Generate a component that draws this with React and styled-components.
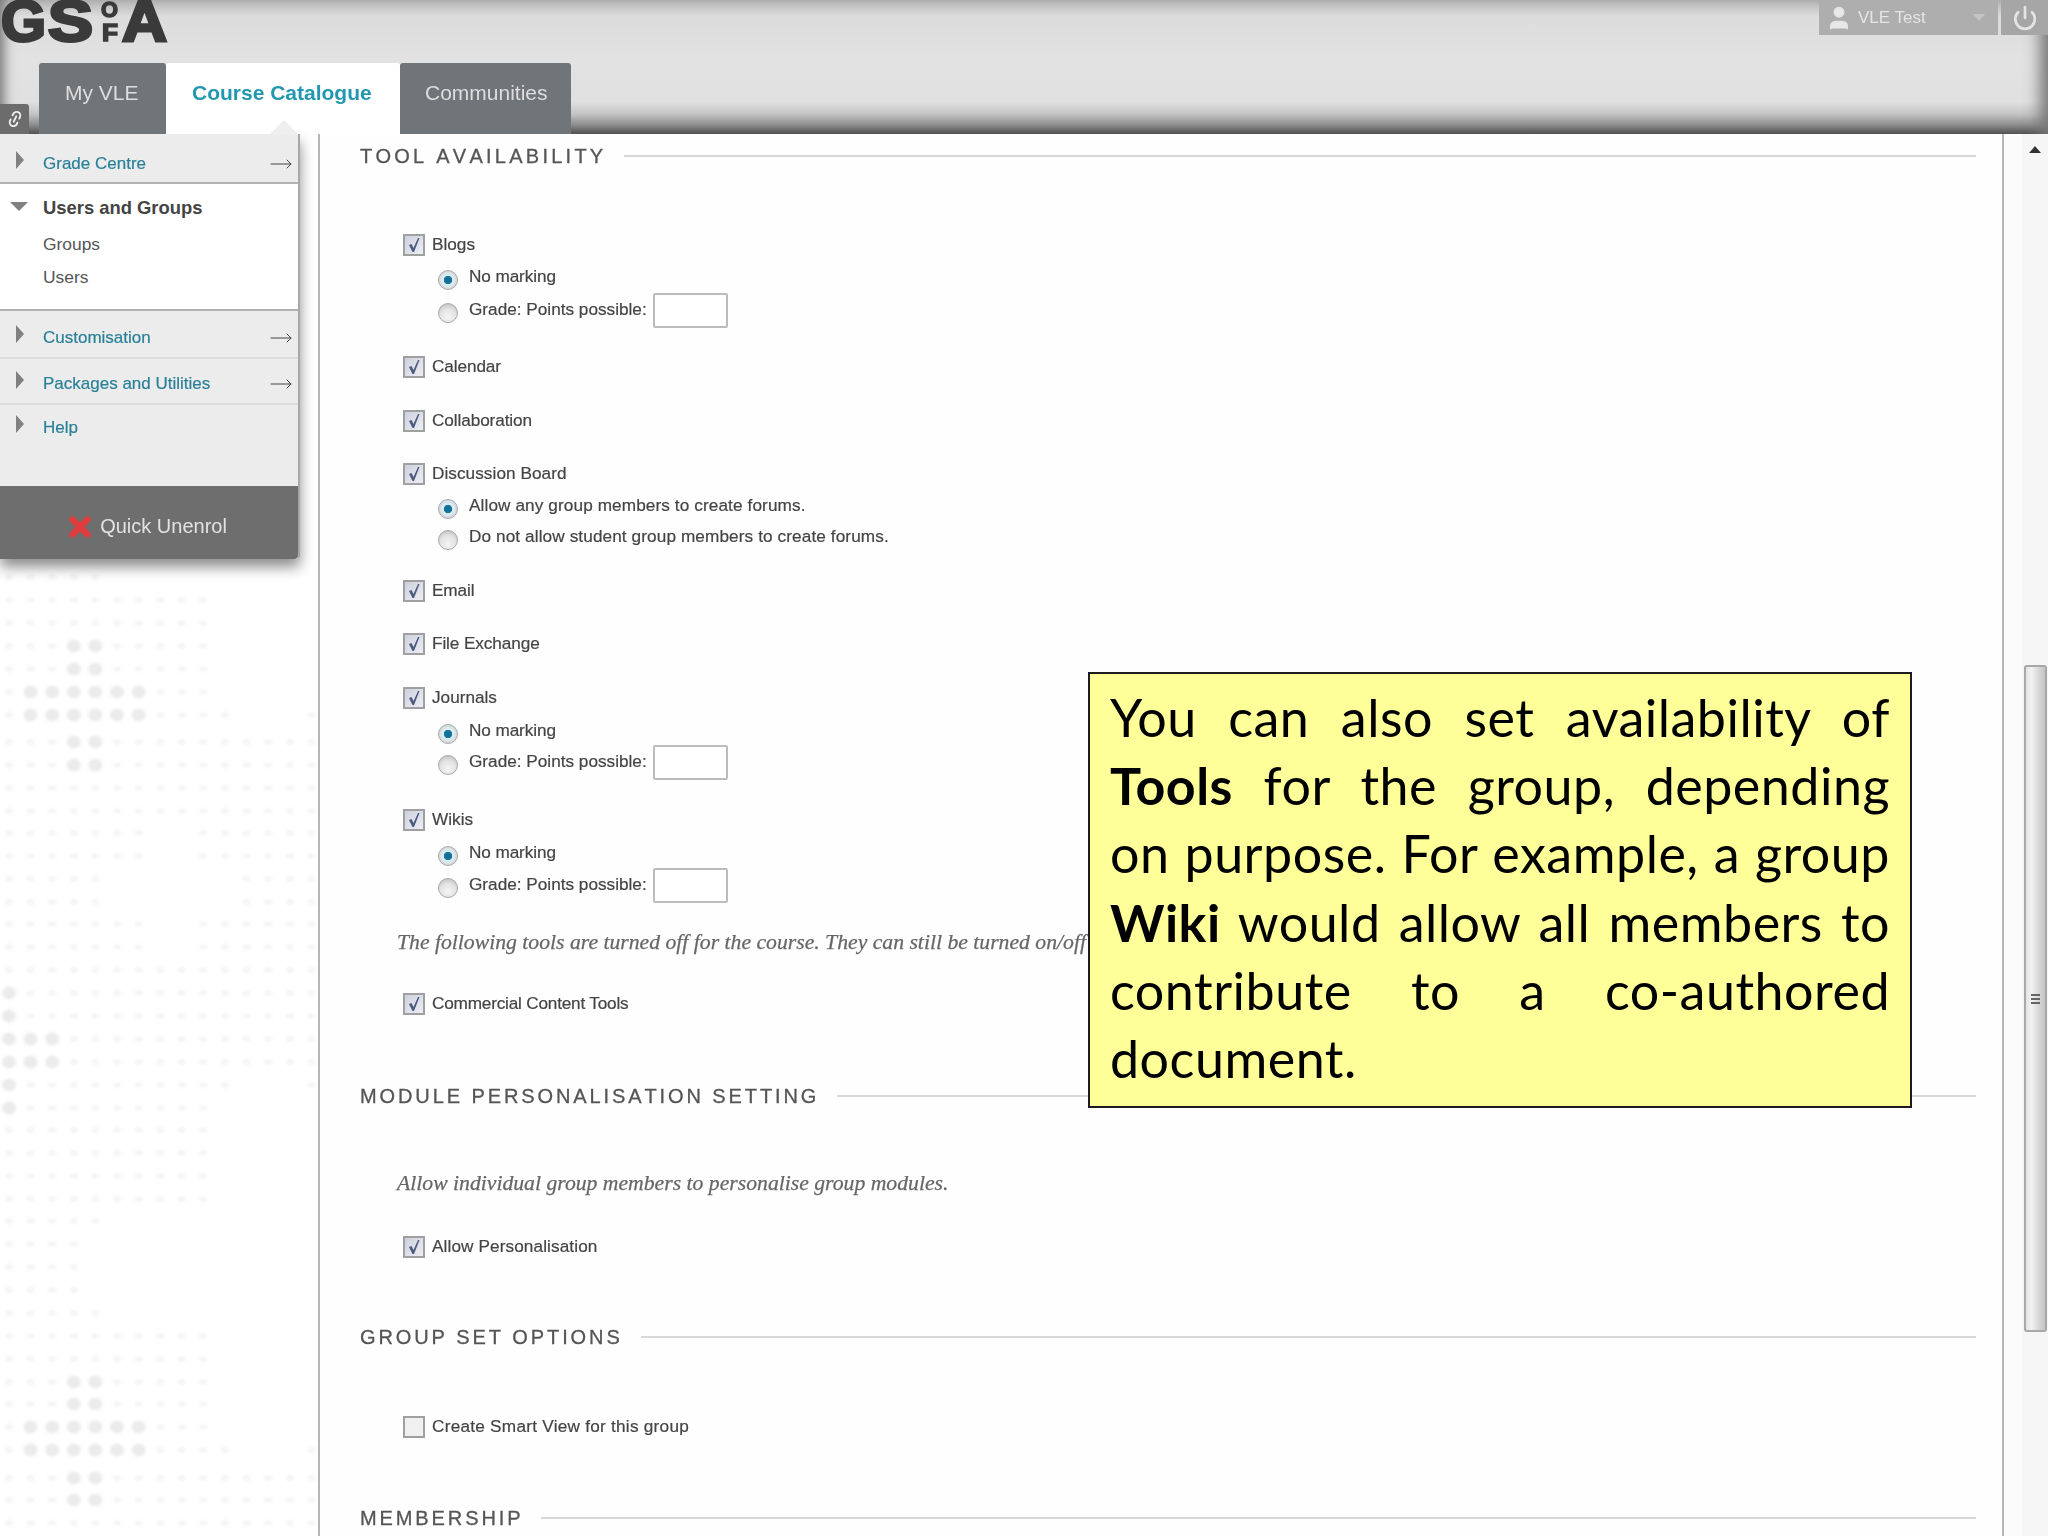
import React from 'react';
import styled, { createGlobalStyle } from 'styled-components';
import { MoveRight, Power, User, Link2, X } from 'lucide-react';

const GlobalStyle = createGlobalStyle`
  html, body {
    margin: 0;
    padding: 0;
    background: #fff;
  }
  body {
    font-family: "Liberation Sans", Arial, sans-serif;
    color: #444;
  }
`;

const Page = styled.div`
  width: 2048px;
  height: 1536px;
  display: flex;
  flex-direction: column;
  overflow: hidden;
  background: #fff;
`;

// Header
const Header = styled.header`
  height: 134px;
  flex: none;
  display: flex;
  flex-direction: column;
  justify-content: space-between;
  background: linear-gradient(#b4b4b4 0, #dcdcdc 16px, #e2e2e2 60px, #e0e0e0 102px, #c4c4c4 114px, #8c8c8c 125px, #505050 134px);
  box-shadow: inset 12px 0 12px -8px #777, inset -22px 0 16px -14px #777;
  filter: blur(0.5px);
  position: relative;
  z-index: 3;
`;

const TopBar = styled.div`
  display: flex;
  justify-content: space-between;
  align-items: flex-start;
`;

const UserArea = styled.div`
  display: flex;
  gap: 3px;
  height: 35px;
`;

const UserBox = styled.div`
  width: 179px;
  display: flex;
  align-items: center;
  padding-left: 6px;
  box-sizing: border-box;
  gap: 5px;
  background: #aeaeae;
  color: #e4e4e4;
  font-size: 17px;
  white-space: nowrap;
`;

const UserCaret = styled.span`
  margin-left: 42px;
  width: 0;
  height: 0;
  border-left: 6px solid transparent;
  border-right: 6px solid transparent;
  border-top: 7px solid #c4c4c4;
`;

const PowerBox = styled.div`
  width: 47px;
  display: flex;
  align-items: center;
  justify-content: center;
  background: #a6a6a6;
  color: #e4e4e4;
`;

const TabRow = styled.nav`
  display: flex;
  align-items: flex-end;
  height: 71px;
`;

const LinkButton = styled.div`
  width: 29px;
  height: 30px;
  margin-right: 10px;
  display: flex;
  align-items: center;
  justify-content: center;
  background: #6c6c6c;
  border-radius: 0 3px 0 0;
  color: #eee;

  svg {
    transform: rotate(-65deg);
  }
`;

const Tab = styled.div`
  position: relative;
  height: 71px;
  width: ${p => p.$width}px;
  box-sizing: border-box;
  padding: 16px 0 0 ${p => p.$pad}px;
  font-size: 21px;
  line-height: 28px;
  border-radius: 3px 3px 0 0;
  background: ${p => (p.$active ? '#fff' : '#6f7578')};
  color: ${p => (p.$active ? '#2397b2' : '#dedede')};
  font-weight: ${p => (p.$active ? 700 : 400)};

  ${p => p.$active && `
    &::after {
      content: '';
      position: absolute;
      left: 104px;
      bottom: 0;
      border-left: 14px solid transparent;
      border-right: 14px solid transparent;
      border-bottom: 14px solid #efefef;
    }
  `}
`;

// Body
const Body = styled.div`
  flex: 1;
  display: flex;
  min-height: 0;
`;

const LeftColumn = styled.aside`
  width: 318px;
  flex: none;
`;

const Menu = styled.div`
  width: 300px;
  height: 425px;
  display: flex;
  flex-direction: column;
  background: #ececec;
  border-right: 2px solid #a8a8a8;
  box-sizing: border-box;
  box-shadow: 0 8px 14px rgba(0, 0, 0, 0.45);
  border-radius: 0 0 4px 0;
  position: relative;
  z-index: 2;
  filter: blur(0.5px);
`;

const MenuRow = styled.div`
  height: ${p => p.$height}px;
  flex: none;
  box-sizing: border-box;
  display: flex;
  align-items: flex-start;
  padding: ${p => p.$top}px 5px 0 16px;
  border-bottom: ${p => (p.$line ? `2px solid ${p.$line}` : 'none')};
`;

const RightTriangle = styled.span`
  width: 0;
  height: 0;
  margin: 0 19px 0 0;
  border-top: 9px solid transparent;
  border-bottom: 9px solid transparent;
  border-left: 8px solid #808080;
`;

const MenuLink = styled.span`
  flex: 1;
  font-size: 17px;
  line-height: 24px;
  margin-top: 1px;
  color: #2a8098;
  -webkit-text-stroke: 0.2px #2a8098;
`;

const MenuArrow = styled(MoveRight)`
  color: #444;
  margin-top: 1px;
`;

const OpenSection = styled.div`
  height: 127px;
  flex: none;
  background: #fff;
  border-bottom: 2px solid #b0b0b0;
  box-sizing: border-box;
  padding: 12px 0 0 43px;
  position: relative;
`;

const DownTriangle = styled.span`
  position: absolute;
  left: 10px;
  top: 18px;
  width: 0;
  height: 0;
  border-left: 9px solid transparent;
  border-right: 9px solid transparent;
  border-top: 9px solid #808080;
`;

const SectionTitle = styled.div`
  font-size: 18.4px;
  font-weight: 700;
  line-height: 24px;
  color: #444;
  margin-bottom: 12px;
`;

const SubLink = styled.div`
  font-size: 17.4px;
  line-height: 24px;
  margin-bottom: 9px;
  color: #555;
`;

const QuickUnenrol = styled.div`
  flex: 1;
  display: flex;
  align-items: center;
  justify-content: center;
  gap: 5px;
  padding: 8px 6px 0 0;
  background: #6e6e6e;
  color: #e2e2e2;
  font-size: 20px;
  border-radius: 0 0 4px 0;
`;

const Halftone = styled.svg`
  display: block;
  filter: blur(1.4px);
`;

const Main = styled.main`
  width: 1686px;
  flex: none;
  position: relative;
  box-sizing: border-box;
  border-left: 2px solid #b6b6b6;
  border-right: 2px solid #b6b6b6;
  padding: 7px 26px 0 40px;
  background: #fefefe;
`;

const Form = styled.div`
  filter: blur(0.45px);
`;

const Heading = styled.div`
  display: flex;
  align-items: center;
  gap: 18px;
  height: 30px;
  margin-top: ${p => p.$top || 0}px;
  font-size: 20px;
  letter-spacing: ${p => p.$track || 2.9}px;
  font-kerning: none;
  color: #555;
  -webkit-text-stroke: 0.3px #555;
  white-space: nowrap;

  &::after {
    content: '';
    flex: 1;
    height: 2px;
    background: #d8d8d8;
  }
`;

const Row = styled.div`
  display: flex;
  align-items: center;
  height: 30px;
  margin-top: ${p => p.$top || 0}px;
  padding-left: ${p => p.$indent}px;
  font-size: 17.2px;
  letter-spacing: ${p => p.$track || 0}px;
  color: #444;
  -webkit-text-stroke: 0.2px #444;
  white-space: nowrap;
`;

const Note = styled(Row)`
  font-family: "Liberation Serif", "Times New Roman", serif;
  font-style: italic;
  font-size: 21.7px;
  color: #666;
  -webkit-text-stroke: 0.25px #666;
`;

const Box = styled.span`
  width: 22px;
  height: 22px;
  flex: none;
  box-sizing: border-box;
  margin: 2px 7px 0 0;
  display: flex;
  align-items: center;
  justify-content: center;
  border: 2px solid #a0a0a0;
  background: ${p => (p.$checked ? 'linear-gradient(135deg, #cdd1de, #eceef5)' : '#f0f0f0')};
`;

const Radio = styled.span`
  width: 20px;
  height: 20px;
  flex: none;
  box-sizing: border-box;
  margin: 7px 11px 0 0;
  border-radius: 50%;
  border: 1px solid #a8a8a8;
  background: ${p => (p.$on
    ? 'radial-gradient(circle, #0d6e94 0, #14789c 30%, #e6eef2 36%, #bcc8d0 100%)'
    : 'radial-gradient(circle at 50% 70%, #f4f4f4 0, #e4e4e4 50%, #b4b4b4 100%)')};
`;

const PointsInput = styled.span`
  width: 75px;
  height: 35px;
  margin: 2px 0 0 6px;
  box-sizing: border-box;
  border: 2px solid #bcbcbc;
  border-radius: 2px;
  background: #fff;
`;

const Callout = styled.div`
  position: absolute;
  left: 768px;
  top: 538px;
  width: 824px;
  height: 436px;
  box-sizing: border-box;
  padding: 9px 20px 0 20px;
  background: #ffff99;
  border: 2px solid #1c1c1c;
  color: #000;
  font-family: Lato, "Liberation Sans", sans-serif;
  font-size: 52px;
  line-height: 68.2px;
  letter-spacing: 0.5px;
`;

const CalloutLine = styled.div`
  white-space: nowrap;
  text-align: justify;
  text-align-last: ${p => (p.$last ? 'left' : 'justify')};

  b {
    font-weight: 700;
  }
`;

const Scroller = styled.div`
  flex: 1;
  display: flex;
`;

const Gutter = styled.div`
  width: 18px;
  flex: none;
  background: #fbfbfb;
`;

const Track = styled.div`
  flex: 1;
  background: #f6f6f6;
  display: flex;
  flex-direction: column;
  align-items: center;
`;

const ArrowUp = styled.span`
  width: 0;
  height: 0;
  margin-top: 12px;
  border-left: 6px solid transparent;
  border-right: 6px solid transparent;
  border-bottom: 7px solid #333;
`;

const Thumb = styled.div`
  width: 23px;
  height: 667px;
  margin-top: 512px;
  box-sizing: border-box;
  display: flex;
  flex-direction: column;
  align-items: center;
  justify-content: center;
  gap: 2px;
  border: 2px solid #a8a8a8;
  border-radius: 3px;
  background: linear-gradient(90deg, #e4e4e4, #f2f2f2 30%, #d8d8d8 65%, #c4c4c4);
`;

const Grip = styled.span`
  width: 9px;
  height: 2px;
  background: #666;
`;

const DOT_ROWS = [
  [577, [[0, 4]]],
  [600, [[0, 9]]], [623, [[0, 9]]],
  [646, [[0, 9]], [3, 4]], [669, [[0, 9]], [3, 4]],
  [692, [[0, 9]], [1, 2, 3, 4, 5, 6]], [715, [[0, 10], [14, 14]], [1, 2, 3, 4, 5, 6]],
  [742, [[0, 14]], [3, 4]], [765, [[0, 14]], [3, 4]],
  [788, [[0, 14]]], [811, [[0, 14]]],
  [833, [[0, 6], [9, 14]]], [856, [[0, 6], [9, 14]]],
  [879, [[0, 4], [11, 14]]], [902, [[0, 4], [11, 14]]],
  [924, [[0, 6], [9, 14]]], [947, [[0, 6], [9, 14]]],
  [970, [[0, 14]]],
  [993, [[0, 14]], [0]], [1016, [[0, 14]], [0]],
  [1039, [[0, 14]], [0, 1, 2]], [1062, [[0, 14]], [0, 1, 2]],
  [1085, [[0, 10], [14, 14]], [0]], [1108, [[0, 9]], [0]],
  [1130, [[0, 9]]], [1153, [[0, 9]]], [1176, [[0, 9]]], [1199, [[0, 9]]],
  [1221, [[0, 4]]], [1244, [[0, 3]]], [1267, [[0, 3]]], [1290, [[0, 3]]], [1313, [[0, 4]]],
  [1336, [[0, 9]]], [1359, [[0, 9]]],
  [1382, [[0, 9]], [3, 4]], [1404, [[0, 9]], [3, 4]],
  [1427, [[0, 9]], [1, 2, 3, 4, 5, 6]], [1450, [[0, 10], [14, 14]], [1, 2, 3, 4, 5, 6]],
  [1478, [[0, 14]], [3, 4]], [1500, [[0, 14]], [3, 4]], [1523, [[0, 14]]],
];

const Dots = () => {
  const dots = [];
  DOT_ROWS.forEach(([y, spans, big = []]) => {
    spans.forEach(([from, to]) => {
      for (let c = from; c <= to; c++) {
        const large = big.includes(c);
        dots.push(
          <ellipse
            key={`${y}-${c}`}
            cx={9 + c * 21.6}
            cy={y - 559}
            rx={large ? 7 : 4}
            ry={large ? 6.5 : 2.8}
            fill={large ? '#ebebeb' : '#f4f4f4'}
          />
        );
      }
    });
  });
  return (
    <Halftone width="318" height="977" aria-hidden="true">
      {dots}
    </Halftone>
  );
};

// logo: heavy caps that sit right against the top of the page
const Logo = () => (
  <svg width="170" height="44" viewBox="0 0 170 44" fill="#3a3a3a" stroke="#3a3a3a" strokeWidth="3"
    fontFamily="Liberation Sans" fontWeight="700">
    <text x="1" y="41" fontSize="57" textLength="45" lengthAdjust="spacingAndGlyphs">G</text>
    <text x="48" y="41" fontSize="57" textLength="45" lengthAdjust="spacingAndGlyphs">S</text>
    <text x="101" y="17" fontSize="22" textLength="17" lengthAdjust="spacingAndGlyphs" strokeWidth="1.5">O</text>
    <text x="102" y="41" fontSize="23" textLength="16" lengthAdjust="spacingAndGlyphs" strokeWidth="1.5">F</text>
    <text x="122" y="41" fontSize="57" textLength="45" lengthAdjust="spacingAndGlyphs">A</text>
  </svg>
);

const CheckMark = () => (
  <svg width="14" height="16" viewBox="0 0 14 16" fill="#4e5a7e">
    <path d="M2 8 L4.5 7 L6.5 11 L11 1 L12.5 1 L7 15 L5.5 15 Z" />
  </svg>
);

const CheckField = ({ top, label, track, checked = true }) => (
  <Row $top={top} $indent={43} $track={track}>
    <Box $checked={checked}>
      {checked && <CheckMark />}
    </Box>
    {label}
  </Row>
);

const RadioField = ({ top, label, on, points, track }) => (
  <Row $top={top} $indent={78} $track={track}>
    <Radio $on={on} />
    {label}
    {points && <PointsInput />}
  </Row>
);

const App = () => (
  <Page>
    <GlobalStyle />
    <Header>
      <TopBar>
        <Logo />
        <UserArea>
          <UserBox>
            <User size={28} fill="#e8e8e8" strokeWidth={1.5} />
            VLE Test
            <UserCaret />
          </UserBox>
          <PowerBox>
            <Power size={26} strokeWidth={2.5} />
          </PowerBox>
        </UserArea>
      </TopBar>
      <TabRow>
        <LinkButton>
          <Link2 size={18} strokeWidth={2.5} />
        </LinkButton>
        <Tab $width={127} $pad={26}>My VLE</Tab>
        <Tab $width={234} $pad={26} $active>Course Catalogue</Tab>
        <Tab $width={171} $pad={25}>Communities</Tab>
      </TabRow>
    </Header>

    <Body>
      <LeftColumn>
        <Menu>
          <MenuRow $height={50} $top={17} $line="#b4b4b4">
            <RightTriangle />
            <MenuLink>Grade Centre</MenuLink>
            <MenuArrow size={24} strokeWidth={1} />
          </MenuRow>
          <OpenSection>
            <DownTriangle />
            <SectionTitle>Users and Groups</SectionTitle>
            <SubLink>Groups</SubLink>
            <SubLink>Users</SubLink>
          </OpenSection>
          <MenuRow $height={48} $top={14} $line="#dcdcdc">
            <RightTriangle />
            <MenuLink>Customisation</MenuLink>
            <MenuArrow size={24} strokeWidth={1} />
          </MenuRow>
          <MenuRow $height={46} $top={12} $line="#dcdcdc">
            <RightTriangle />
            <MenuLink>Packages and Utilities</MenuLink>
            <MenuArrow size={24} strokeWidth={1} />
          </MenuRow>
          <MenuRow $height={81} $top={10}>
            <RightTriangle />
            <MenuLink>Help</MenuLink>
          </MenuRow>
          <QuickUnenrol>
            <X size={30} strokeWidth={5} color="#e23b3b" />
            Quick Unenrol
          </QuickUnenrol>
        </Menu>
        <Dots />
      </LeftColumn>

      <Main>
        <Form>
          <Heading $track={3.25}>TOOL AVAILABILITY</Heading>
          <CheckField top={58} label="Blogs" />
          <RadioField top={2} label="No marking" on track={-0.1} />
          <RadioField top={3} label="Grade: Points possible:" points />
          <CheckField top={27} label="Calendar" track={-0.1} />
          <CheckField top={24} label="Collaboration" track={-0.1} />
          <CheckField top={23} label="Discussion Board" track={0.05} />
          <RadioField top={2} label="Allow any group members to create forums." track={0.1} on />
          <RadioField top={1} label="Do not allow student group members to create forums." track={0.1} />
          <CheckField top={24} label="Email" track={-0.1} />
          <CheckField top={23} label="File Exchange" track={-0.1} />
          <CheckField top={24} label="Journals" />
          <RadioField top={3} label="No marking" on track={-0.1} />
          <RadioField top={1} label="Grade: Points possible:" points />
          <CheckField top={28} label="Wikis" />
          <RadioField top={3} label="No marking" on track={-0.1} />
          <RadioField top={2} label="Grade: Points possible:" points />
          <Note $top={28} $indent={37}>The following tools are turned off for the course. They can still be turned on/off f</Note>
          <CheckField top={31} label="Commercial Content Tools" track={-0.2} />

          <Heading $top={63}>MODULE PERSONALISATION SETTING</Heading>
          <Note $top={57} $indent={37}>Allow individual group members to personalise group modules.</Note>
          <CheckField top={33} label="Allow Personalisation" track={0.1} />

          <Heading $top={61}>GROUP SET OPTIONS</Heading>
          <CheckField top={59} label="Create Smart View for this group" track={0.25} checked={false} />

          <Heading $top={62}>MEMBERSHIP</Heading>
        </Form>

        <Callout>
          <CalloutLine>You can also set availability of</CalloutLine>
          <CalloutLine><b>Tools</b> for the group, depending</CalloutLine>
          <CalloutLine>on purpose. For example, a group</CalloutLine>
          <CalloutLine><b>Wiki</b> would allow all members to</CalloutLine>
          <CalloutLine>contribute to a co-authored</CalloutLine>
          <CalloutLine $last>document.</CalloutLine>
        </Callout>
      </Main>

      <Scroller>
        <Gutter />
        <Track>
          <ArrowUp />
          <Thumb>
            <Grip />
            <Grip />
            <Grip />
          </Thumb>
        </Track>
      </Scroller>
    </Body>
  </Page>
);

export default App;
